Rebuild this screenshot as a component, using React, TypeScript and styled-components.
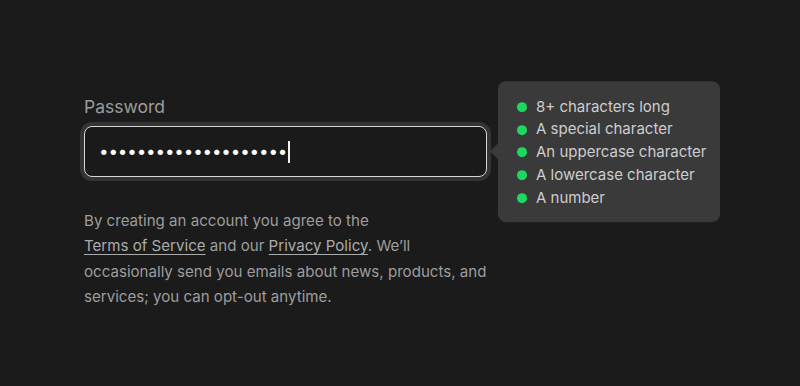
import React from "react";
import styled, { createGlobalStyle } from "styled-components";

const Global = createGlobalStyle`
  html, body { margin: 0; padding: 0; background: #1b1b1b; }
  body { font-family: Inter, "Noto Sans", sans-serif; -webkit-font-smoothing: antialiased; }
`;

const Page = styled.main`
  min-height: 386px;
  padding: 97px 0 0 84px;
  box-sizing: border-box;
`;

const Form = styled.div`
  width: 403px;
  display: flex;
  flex-direction: column;
`;

const Label = styled.label`
  font-size: 17.5px;
  line-height: 20px;
  color: #9b9b9b;
  margin-bottom: 9px;
`;

const FieldWrap = styled.div`
  position: relative;
`;

const Field = styled.div`
  height: 51px;
  box-sizing: border-box;
  border: 1.5px solid #d6d6d6;
  border-radius: 8px;
  background: #1a1a1a;
  box-shadow: 0 0 0 4px #343434;
  display: flex;
  align-items: center;
  padding-left: 14px;
`;

const Dots = styled.span`
  font-size: 17px;
  letter-spacing: -0.15px;
  color: #ffffff;
  line-height: 1;
`;

const Caret = styled.span`
  width: 1.5px;
  height: 22px;
  background: #f2f2f2;
  margin-left: 1px;
`;

const Tooltip = styled.div`
  position: absolute;
  left: 414px;
  top: 50%;
  transform: translateY(-50%);
  width: 222px;
  box-sizing: border-box;
  background: #3a3a3a;
  border-radius: 8px;
  padding: 15px 10px 13px 19px;
  display: flex;
  flex-direction: column;

  &::before {
    content: "";
    position: absolute;
    left: -8px;
    top: 50%;
    margin-top: -8px;
    border-top: 8px solid transparent;
    border-bottom: 8px solid transparent;
    border-right: 8px solid #3a3a3a;
  }
`;

const Rule = styled.div`
  display: flex;
  align-items: center;
  gap: 9px;
  font-size: 15px;
  line-height: 22.75px;
  color: #cdcdcd;
  white-space: nowrap;
`;

const Dot = styled.span`
  width: 10px;
  height: 10px;
  border-radius: 50%;
  background: #1ed760;
  flex: none;
`;

const Legal = styled.p`
  margin: 31px 0 0;
  font-size: 15.1px;
  line-height: 25.3px;
  color: #9d9d9d;
`;

const Link = styled.a`
  color: #ababab;
  text-decoration: underline;
  text-underline-offset: 3px;
  text-decoration-thickness: 1px;
  white-space: nowrap;
`;

const rules = [
  "8+ characters long",
  "A special character",
  "An uppercase character",
  "A lowercase character",
  "A number",
];

export default function App() {
  return (
    <>
      <Global />
      <Page>
        <Form>
          <Label>Password</Label>
          <FieldWrap>
            <Field>
              <Dots>{"•".repeat(20)}</Dots>
              <Caret />
            </Field>
            <Tooltip>
              {rules.map((r) => (
                <Rule key={r}>
                  <Dot />
                  {r}
                </Rule>
              ))}
            </Tooltip>
          </FieldWrap>
          <Legal>
            By creating an account you agree to the{" "}
            <Link href="#">Terms of Service</Link> and our{" "}
            <Link href="#">Privacy Policy</Link>. We’ll occasionally send you
            emails about news, products, and services; you can opt-out anytime.
          </Legal>
        </Form>
      </Page>
    </>
  );
}
